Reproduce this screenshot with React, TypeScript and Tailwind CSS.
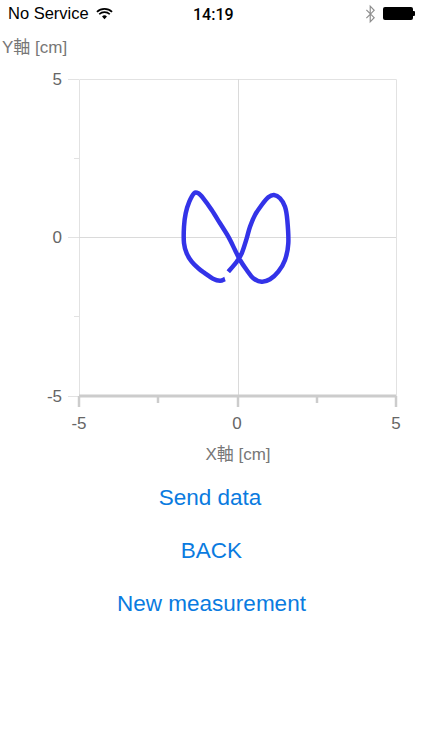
const points = [
  [225, 279], [220, 280.7], [213, 278.7], [205, 273.3], [198.3, 268.3], [191.7, 261.7], [186.7, 253.3],
  [184, 243.3], [184, 226.7], [185.7, 213.3], [189.3, 201.7], [194, 193.3], [198.3, 193.3], [203.3, 198.3],
  [211.7, 210], [220, 223.3], [228.3, 236.7], [235, 250], [240, 260], [246.7, 270], [253.3, 278.3],
  [261.7, 281.7], [270, 279.3], [278.3, 271.7], [285, 260], [288.3, 243.3], [287.3, 220], [285, 206.7],
  [280, 198.3], [274, 195], [268.3, 197.3], [261.7, 205], [255, 215], [250, 226.7], [246.7, 238.3],
  [241.7, 253.3], [236.7, 261.7], [228.3, 271.7],
];

// smooth the traced points so the line doesn't look polygonal
function smoothPath(pts: number[][]) {
  let d = `M${pts[0][0]} ${pts[0][1]}`;
  for (let i = 0; i < pts.length - 1; i++) {
    const p0 = pts[Math.max(i - 1, 0)];
    const p1 = pts[i];
    const p2 = pts[i + 1];
    const p3 = pts[Math.min(i + 2, pts.length - 1)];
    const c1x = p1[0] + (p2[0] - p0[0]) / 6;
    const c1y = p1[1] + (p2[1] - p0[1]) / 6;
    const c2x = p2[0] - (p3[0] - p1[0]) / 6;
    const c2y = p2[1] - (p3[1] - p1[1]) / 6;
    d += `C${c1x} ${c1y} ${c2x} ${c2y} ${p2[0]} ${p2[1]}`;
  }
  return d;
}

const ticks = [79, 158, 238, 317, 396];

function Chart() {
  return (
    <svg viewBox="0 0 423 362" className="mt-[12px] block h-[362px] w-[423px]">
      <g transform="translate(0 -70)">
        <g stroke="#e2e2e2" strokeWidth="1" fill="none">
          <path d="M79.5 79.5H396.5V396M79.5 79.5V396" />
          <path d="M238.5 79V396M79 237.5H396" stroke="#dadada" />
          <path d="M68 79.5H79M68 237.5H79M68 396.5H79M74 158.5H79M74 316.5H79" />
        </g>
        <path d="M79 396H396" stroke="#cccccc" strokeWidth="3" />
        {ticks.map((x, i) => (
          <path
            key={x}
            d={`M${x} 396V${i % 2 === 0 ? 407 : 403}`}
            stroke="#cccccc"
            strokeWidth="2.5"
          />
        ))}
        <path d={smoothPath(points)} fill="none" stroke="#3333e8" strokeWidth="4.5" strokeLinejoin="round" />
        <g fill="#666666" fontSize="17" fontFamily="Liberation Sans, sans-serif">
          <text x="62" y="85" textAnchor="end">5</text>
          <text x="62" y="243" textAnchor="end">0</text>
          <text x="62" y="402" textAnchor="end">-5</text>
          <text x="79" y="429" textAnchor="middle">-5</text>
          <text x="237" y="429" textAnchor="middle">0</text>
          <text x="396" y="429" textAnchor="middle">5</text>
        </g>
      </g>
    </svg>
  );
}

function StatusBar() {
  return (
    <div className="relative flex h-[27px] items-center justify-between pl-[8px] pr-[8px] text-[16.5px] text-black">
      <div className="flex items-center gap-[7px]">
        <span>No Service</span>
        <svg viewBox="0 0 18 13" className="h-[13px] w-[17px]">
          <path d="M9 12.5 6.4 9.6a3.8 3.8 0 0 1 5.2 0Z" fill="#000" />
          <path d="M1 4.8a11.5 11.5 0 0 1 16 0M3.4 7.3a8 8 0 0 1 11.2 0" fill="none" stroke="#000" strokeWidth="1.8" />
        </svg>
      </div>
      <span
        className="absolute left-[193px] top-[3px] text-[16px] font-medium"
        style={{ fontFamily: 'Roboto, sans-serif' }}
      >
        14:19
      </span>
      <div className="flex items-center gap-[7px]">
        <svg viewBox="0 0 12 20" className="h-[20px] w-[11px]">
          <path d="M1.5 5.5 10 14l-4.3 4.5V1.5L10 6l-8.5 8.5" fill="none" stroke="#8e8e8e" strokeWidth="1.3" />
        </svg>
        <div className="flex items-center">
          <div className="h-[13px] w-[30px] rounded-[2px] bg-black" />
          <div className="h-[5px] w-[2px] rounded-r-[1px] bg-black" />
        </div>
      </div>
    </div>
  );
}

export default function App() {
  return (
    <div
      className="h-[750px] w-[423px] overflow-hidden bg-white"
      style={{ fontFamily: '"Liberation Sans", "Noto Sans CJK JP", sans-serif' }}
    >
      <StatusBar />
      <div className="mt-[10px] h-[21px] pl-[2px] text-[17px] leading-[21px] text-[#777777]">Y軸 [cm]</div>
      <Chart />
      <div className="mt-[13px] pl-[53px] text-center text-[17px] leading-[20px] text-[#777777]">X軸 [cm]</div>
      <div className="mt-[6px] flex flex-col items-center text-[22.5px] leading-[53px] text-[#0a7be0]">
        <span className="h-[53px] pr-[3px]">Send data</span>
        <span className="h-[53px]">BACK</span>
        <span className="h-[53px]">New measurement</span>
      </div>
    </div>
  );
}
